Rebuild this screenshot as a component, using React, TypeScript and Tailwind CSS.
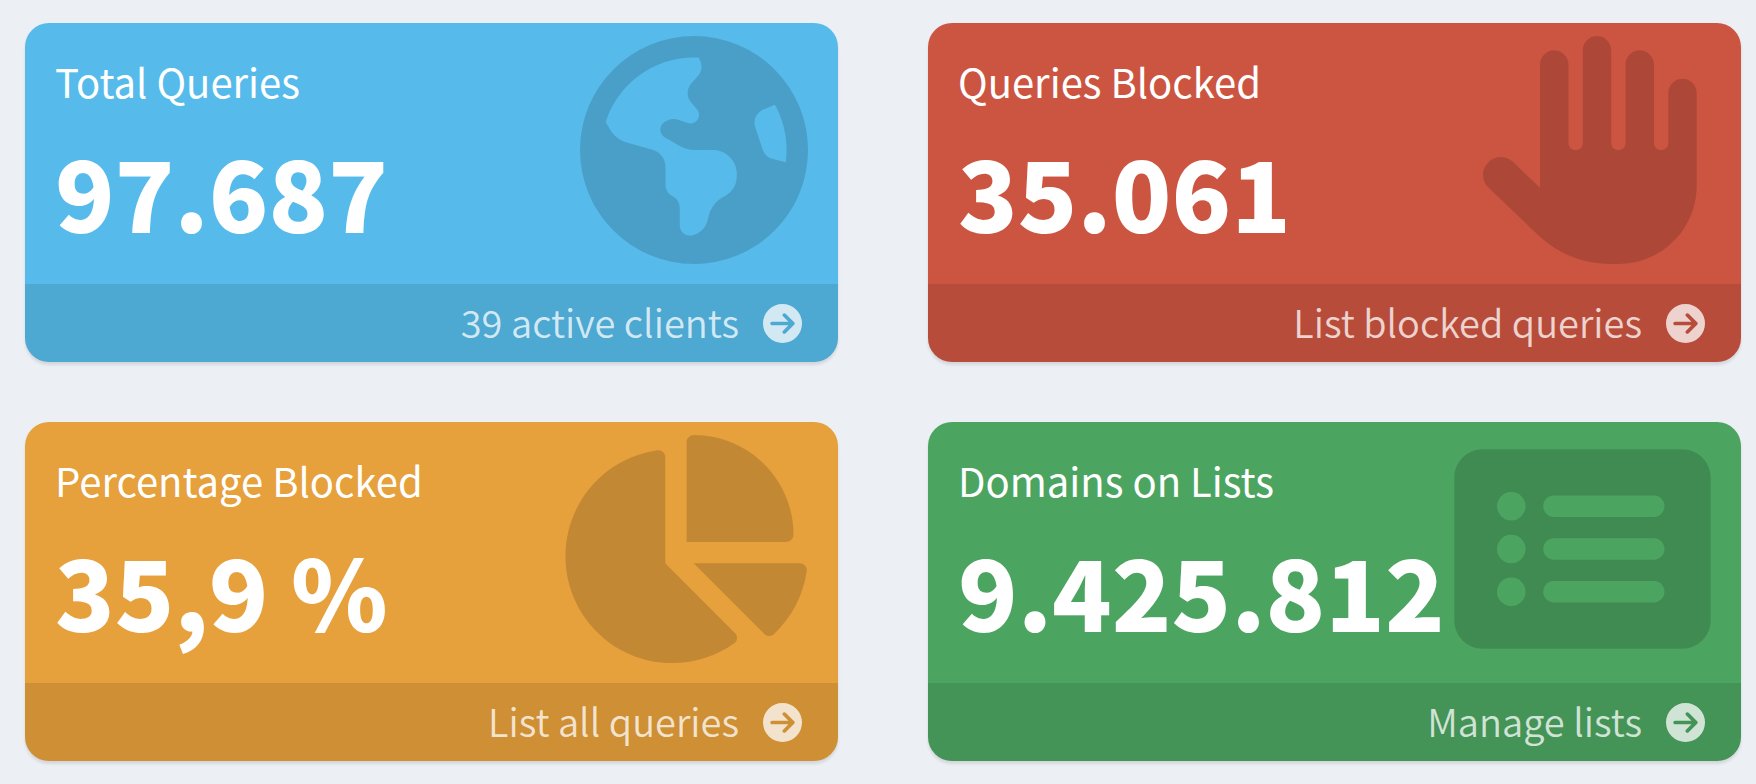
import type { IconType } from "react-icons";
import {
  FaChartPie,
  FaCircleArrowRight,
  FaEarthAmericas,
  FaHand,
  FaRectangleList,
} from "react-icons/fa6";

interface StatBox {
  title: string;
  value: string;
  link: string;
  color: string;
  icon: IconType;
  iconWidth: string;
}

const boxes: StatBox[] = [
  {
    title: "Total Queries",
    value: "97.687",
    link: "39 active clients",
    color: "bg-[#56bbea]",
    icon: FaEarthAmericas,
    iconWidth: "w-[228px]",
  },
  {
    title: "Queries Blocked",
    value: "35.061",
    link: "List blocked queries",
    color: "bg-[#cc5542]",
    icon: FaHand,
    iconWidth: "w-[228px]",
  },
  {
    title: "Percentage Blocked",
    value: "35,9 %",
    link: "List all queries",
    color: "bg-[#e6a03c]",
    icon: FaChartPie,
    iconWidth: "w-[257px]",
  },
  {
    title: "Domains on Lists",
    value: "9.425.812",
    link: "Manage lists",
    color: "bg-[#4ca461]",
    icon: FaRectangleList,
    iconWidth: "w-[257px]",
  },
];

function StatCard({ title, value, link, color, icon: Icon, iconWidth }: StatBox) {
  return (
    <section className={`overflow-hidden rounded-3xl text-white shadow-[0_3px_3px_rgba(0,0,0,0.1)] ${color}`}>
      <div className="flex items-start justify-between px-[30px]">
        <div className="pt-7 pb-11 whitespace-nowrap">
          <h2 className="text-[40px] leading-[60px]">{title}</h2>
          <p className="mt-[29px] text-[98px] leading-[100px] font-black">{value}</p>
        </div>
        <Icon className={`mt-[13px] h-[228px] shrink-0 text-black/15 ${iconWidth}`} aria-hidden="true" />
      </div>
      <a
        href="#"
        className="flex h-[78px] items-center justify-end gap-6 bg-black/10 px-9 text-[38px] leading-[60px] font-[350] text-white/75 hover:bg-black/15 hover:text-white"
      >
        <span className="pb-0.5">{link}</span>
        <FaCircleArrowRight className="size-[39px]" aria-hidden="true" />
      </a>
    </section>
  );
}

export default function App() {
  return (
    <main className="grid min-h-screen grid-cols-2 content-start gap-x-[90px] gap-y-[60px] bg-[#ecf0f5] pt-[23px] pr-[15px] pb-[23px] pl-[25px] font-['Noto_Sans_CJK_SC',sans-serif]">
      {boxes.map((box) => (
        <StatCard key={box.title} {...box} />
      ))}
    </main>
  );
}
